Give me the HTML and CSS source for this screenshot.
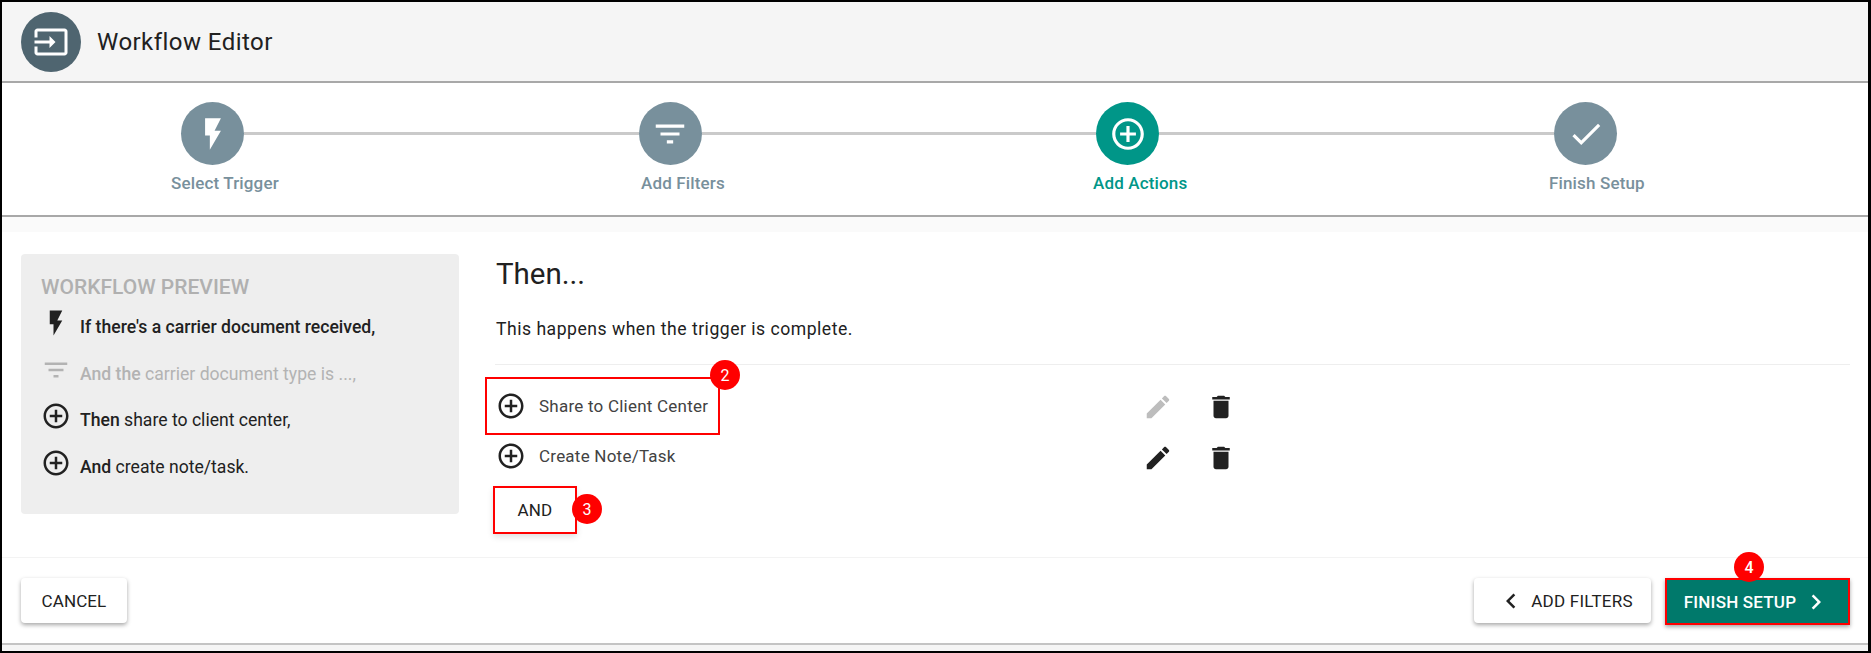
FILE: index.html
```html
<!DOCTYPE html>
<html lang="en">
<head>
<meta charset="utf-8">
<title>Workflow Editor</title>
<link rel="stylesheet" href="styles.css">
</head>
<body>
<svg class="defs" width="0" height="0" aria-hidden="true">
  <symbol id="i-input" viewBox="0 0 24 24"><path d="M21 3.01H3c-1.1 0-2 .9-2 2V9h2V4.99h18v14.03H3V15H1v4.01c0 1.1.9 1.98 2 1.98h18c1.1 0 2-.88 2-1.98v-14c0-1.11-.9-2-2-2zM11 16l4-4-4-4v3H1v2h10v3z"/></symbol>
  <symbol id="i-flash" viewBox="0 0 24 24"><path d="M7 2v11h3v9l7-12h-4l4-8z"/></symbol>
  <symbol id="i-filter" viewBox="0 0 24 24"><path d="M10 18h4v-2h-4v2zM3 6v2h18V6H3zm3 7h12v-2H6v2z"/></symbol>
  <symbol id="i-add" viewBox="0 0 24 24"><path d="M13 7h-2v4H7v2h4v4h2v-4h4v-2h-4V7zm-1-5C6.48 2 2 6.48 2 12s4.48 10 10 10 10-4.48 10-10S17.52 2 12 2zm0 18c-4.41 0-8-3.59-8-8s3.59-8 8-8 8 3.59 8 8-3.59 8-8 8z"/></symbol>
  <symbol id="i-check" viewBox="0 0 24 24"><path d="M9 16.17L4.83 12l-1.42 1.41L9 19 21 7l-1.41-1.41z"/></symbol>
  <symbol id="i-edit" viewBox="0 0 24 24"><path d="M3 17.25V21h3.75L17.81 9.94l-3.75-3.75L3 17.25zM20.71 7.04c.39-.39.39-1.02 0-1.41l-2.34-2.34c-.39-.39-1.02-.39-1.41 0l-1.83 1.83 3.75 3.75 1.83-1.83z"/></symbol>
  <symbol id="i-delete" viewBox="0 0 24 24"><path d="M6 19c0 1.1.9 2 2 2h8c1.1 0 2-.9 2-2V7H6v12zM19 4h-3.5l-1-1h-5l-1 1H5v2h14V4z"/></symbol>
  <symbol id="i-left" viewBox="0 0 24 24"><path d="M15.41 7.41L14 6l-6 6 6 6 1.41-1.41L10.83 12z"/></symbol>
  <symbol id="i-right" viewBox="0 0 24 24"><path d="M10 6L8.59 7.41 13.17 12l-4.58 4.59L10 18l6-6z"/></symbol>
</svg>
<div class="frame">
  <header class="header">
    <span class="header-icon"><svg class="ic-36"><use href="#i-input"/></svg></span>
    <h1 class="title">Workflow Editor</h1>
  </header>

  <section class="stepper">
    <div class="step-track">
      <span class="step-dot"><svg class="ic-38"><use href="#i-flash"/></svg></span>
      <span class="step-line"></span>
      <span class="step-dot"><svg class="ic-38"><use href="#i-filter"/></svg></span>
      <span class="step-line"></span>
      <span class="step-dot active"><svg class="ic-38"><use href="#i-add"/></svg></span>
      <span class="step-line"></span>
      <span class="step-dot"><svg class="ic-38"><use href="#i-check"/></svg></span>
    </div>
    <div class="step-labels">
      <span class="step-label">Select Trigger</span>
      <span class="step-label">Add Filters</span>
      <span class="step-label active">Add Actions</span>
      <span class="step-label">Finish Setup</span>
    </div>
  </section>

  <div class="strip"></div>

  <main class="content">
    <aside class="preview">
      <h2 class="preview-title">WORKFLOW PREVIEW</h2>
      <div class="preview-row"><svg class="ic-30 pv-icon"><use href="#i-flash"/></svg><span class="pv-text"><b>If there's a carrier document received,</b></span></div>
      <div class="preview-row muted"><svg class="ic-30 pv-icon"><use href="#i-filter"/></svg><span class="pv-text"><b>And the</b> carrier document type is ...,</span></div>
      <div class="preview-row"><svg class="ic-30 pv-icon"><use href="#i-add"/></svg><span class="pv-text"><b>Then</b> share to client center,</span></div>
      <div class="preview-row"><svg class="ic-30 pv-icon"><use href="#i-add"/></svg><span class="pv-text"><b>And</b> create note/task.</span></div>
    </aside>

    <section class="actions">
      <h2 class="then">Then...</h2>
      <p class="lead">This happens when the trigger is complete.</p>
      <div class="rule"></div>
      <div class="action-row">
        <div class="action-name boxed">
          <svg class="ic-30"><use href="#i-add"/></svg>
          <span class="action-text">Share to Client Center</span>
          <span class="badge badge-2">2</span>
        </div>
        <div class="action-tools">
          <svg class="ic-30 faded"><use href="#i-edit"/></svg>
          <svg class="ic-30"><use href="#i-delete"/></svg>
        </div>
      </div>
      <div class="action-row second">
        <div class="action-name">
          <svg class="ic-30"><use href="#i-add"/></svg>
          <span class="action-text">Create Note/Task</span>
        </div>
        <div class="action-tools">
          <svg class="ic-30"><use href="#i-edit"/></svg>
          <svg class="ic-30"><use href="#i-delete"/></svg>
        </div>
      </div>
      <button class="and-btn">AND<span class="badge badge-3">3</span></button>
    </section>
  </main>

  <footer class="footer">
    <button class="btn cancel">CANCEL</button>
    <div class="footer-right">
      <button class="btn back"><svg class="ic-30"><use href="#i-left"/></svg>ADD FILTERS</button>
      <button class="btn finish">FINISH SETUP<svg class="ic-30"><use href="#i-right"/></svg><span class="badge badge-4">4</span></button>
    </div>
  </footer>
  <div class="bottom-strip"></div>
</div>
</body>
</html>
```
FILE: styles.css
```css
* { box-sizing: border-box; }
html, body { margin: 0; padding: 0; }
body { width: 1871px; height: 653px; overflow: hidden; background: #fff; font-family: Roboto, "Liberation Sans", sans-serif; color: #212121; }
.defs { position: absolute; }
svg { fill: currentColor; display: block; flex: none; }
.ic-36 { width: 36px; height: 36px; }
.ic-38 { width: 38px; height: 38px; }
.ic-30 { width: 30px; height: 30px; }

.frame { width: 1871px; height: 653px; border: solid #000; border-width: 2px 3px 2px 2px; display: flex; flex-direction: column; background: #fff; }

.header { height: 81px; flex: none; background: #f5f5f5; border-bottom: 2px solid #a8a8a8; display: flex; align-items: center; padding: 0 0 0 19px; }
.header-icon { width: 60px; height: 60px; border-radius: 50%; background: #4f6570; color: #fff; display: flex; align-items: center; justify-content: center; }
.title { margin: 0 0 0 16px; font-size: 24px; font-weight: 400; letter-spacing: .45px; color: #212121; }

.stepper { height: 134px; flex: none; border-bottom: 2px solid #a8a8a8; display: flex; flex-direction: column; padding-top: 19px; }
.step-track { display: flex; align-items: center; padding: 0 251px 0 179px; }
.step-dot { width: 63px; height: 63px; border-radius: 50%; background: #78909c; color: #fff; display: flex; align-items: center; justify-content: center; flex: none; }
.step-dot.active { background: #009688; }
.step-line { flex: 1; height: 3px; background: #cacaca; }
.step-labels { display: flex; margin-top: 6px; padding-left: 169px; font-size: 17px; letter-spacing: .15px; font-weight: 500; line-height: 24px; }
.step-label { color: #78909c; flex: none; }
.step-label:nth-child(1) { width: 470px; }
.step-label:nth-child(2) { width: 452px; }
.step-label:nth-child(3) { width: 456px; }
.step-label.active { color: #009688; }

.strip { height: 15px; flex: none; background: #fafafa; }

.content { flex: 1; display: flex; padding: 22px 18px 0 19px; }
.preview { width: 438px; height: 260px; flex: none; background: #eeeeee; border-radius: 4px; padding: 21px 20px 0 20px; }
.preview-title { margin: 0; font-size: 21px; line-height: 24px; font-weight: 500; color: #b0b0b0; }
.preview-row { display: flex; align-items: center; height: 46.5px; }
.preview-row:first-of-type { margin-top: 5px; }
.preview-row.muted { color: #b3b3b3; }
.pv-icon { margin: -8px 9px 0 0; }
.pv-text { font-size: 17.6px; }
.pv-text b { font-weight: 500; }

.actions { flex: 1; padding-left: 36px; display: flex; flex-direction: column; }
.then { margin: 0; padding: 3px 0 0 1px; font-size: 29.5px; font-weight: 400; line-height: 34px; }
.lead { margin: 26px 0 0 1px; font-size: 17.6px; line-height: 24px; letter-spacing: .5px; }
.rule { height: 1px; background: #eee; margin-top: 23px; }

.action-row { display: flex; align-items: center; margin-top: 12px; height: 58px; position: relative; }
.action-row.second { margin-top: -8px; height: 58px; }
.action-name { display: flex; align-items: center; width: 235px; height: 58px; margin-left: -10px; padding-left: 9px; gap: 13px; position: relative; border: 2px solid transparent; }
.boxed { border-color: #f00; }
.action-text { font-size: 17px; letter-spacing: .23px; color: #424242; white-space: nowrap; }
.action-tools { display: flex; gap: 33px; margin: 2px 0 0 423px; }
.second .action-tools { margin-top: 4px; }
.faded { color: #bdbdbd; }

.badge { position: absolute; width: 30px; height: 30px; border-radius: 50%; background: #f00; color: #fff; font-size: 16px; font-weight: 400; display: flex; align-items: center; justify-content: center; letter-spacing: 0; }
.badge-2 { right: -22px; top: -19px; }
.badge-3 { right: -27px; top: 6px; }
.badge-4 { left: 67px; top: -28px; font-weight: 500; }

.and-btn { position: relative; align-self: flex-start; margin: 1px 0 0 -2px; width: 84px; height: 48px; background: #fff; border: 2px solid #f00; font: 400 17px Roboto, sans-serif; color: #212121; letter-spacing: .2px; box-shadow: 0 3px 6px rgba(0,0,0,.12); }

.footer { height: 88px; flex: none; border-top: 1px solid #f3f3f3; border-bottom: 2px solid #c4c4c4; display: flex; justify-content: space-between; align-items: flex-start; padding: 20px 18px 0 19px; }
.footer-right { display: flex; gap: 14px; }
.btn { height: 45px; border: 0; border-radius: 4px; background: #fff; font: 400 17px Roboto, sans-serif; color: #212121; box-shadow: 0 2px 4px rgba(0,0,0,.35); display: flex; align-items: center; justify-content: center; position: relative; }
.cancel { width: 106px; letter-spacing: .1px; }
.back { width: 177px; letter-spacing: .25px; gap: 5px; padding-right: 2px; }
.finish { width: 185px; height: 47px; background: #00796b; color: #fff; border: 2px solid #f00; border-radius: 0; gap: 5px; padding-left: 6px; font-weight: 500; letter-spacing: .2px; }
.bottom-strip { height: 6px; flex: none; background: #f5f5f5; }
```
